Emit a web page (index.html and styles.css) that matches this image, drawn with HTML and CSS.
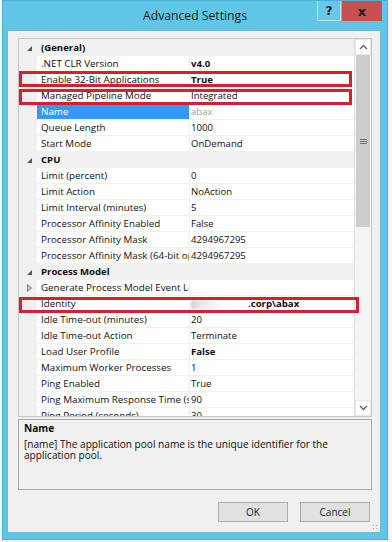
FILE: index.html
```html
<!DOCTYPE html>
<html>
<head>
	<meta charset="utf-8">
	<title>Advanced Settings</title>
	<link rel="stylesheet" href="styles.css">
</head>
<body>
	<div class="window">

		<div class="titlebar">
			<span></span>
			<span class="title">Advanced Settings</span>
			<div class="caption">
				<span class="cap-help">?</span>
				<span class="cap-close">x</span>
			</div>
		</div>

		<div class="client">

			<div class="grid">
				<div class="rows">
					<div class="cat"><span class="exp open"></span>(General)</div>
					<div class="prop"><span class="name">.NET CLR Version</span><span class="val bold">v4.0</span></div>
					<div class="prop"><span class="name">Enable 32-Bit Applications</span><span class="val bold">True</span></div>
					<div class="prop"><span class="name">Managed Pipeline Mode</span><span class="val">Integrated</span></div>
					<div class="prop selected"><span class="name">Name</span><span class="val dim">abax</span></div>
					<div class="prop"><span class="name">Queue Length</span><span class="val">1000</span></div>
					<div class="prop"><span class="name">Start Mode</span><span class="val">OnDemand</span></div>
					<div class="cat"><span class="exp open"></span>CPU</div>
					<div class="prop"><span class="name">Limit (percent)</span><span class="val">0</span></div>
					<div class="prop"><span class="name">Limit Action</span><span class="val">NoAction</span></div>
					<div class="prop"><span class="name">Limit Interval (minutes)</span><span class="val">5</span></div>
					<div class="prop"><span class="name">Processor Affinity Enabled</span><span class="val">False</span></div>
					<div class="prop"><span class="name">Processor Affinity Mask</span><span class="val">4294967295</span></div>
					<div class="prop"><span class="name">Processor Affinity Mask (64-bit option)</span><span class="val">4294967295</span></div>
					<div class="cat"><span class="exp open"></span>Process Model</div>
					<div class="prop"><span class="exp shut"></span><span class="name">Generate Process Model Event Log Entry</span><span class="val"></span></div>
					<div class="prop"><span class="name">Identity</span><span class="val bold"><span class="redact"></span>.corp\abax</span></div>
					<div class="prop"><span class="name">Idle Time-out (minutes)</span><span class="val">20</span></div>
					<div class="prop"><span class="name">Idle Time-out Action</span><span class="val">Terminate</span></div>
					<div class="prop"><span class="name">Load User Profile</span><span class="val bold">False</span></div>
					<div class="prop"><span class="name">Maximum Worker Processes</span><span class="val">1</span></div>
					<div class="prop"><span class="name">Ping Enabled</span><span class="val">True</span></div>
					<div class="prop"><span class="name">Ping Maximum Response Time (seconds)</span><span class="val">90</span></div>
					<div class="prop"><span class="name">Ping Period (seconds)</span><span class="val">30</span></div>
				</div>

				<div class="scrollbar">
					<div class="sb-arrow">
						<svg width="9" height="6" viewBox="0 0 9 6"><path d="M1 5 L4.5 1.5 L8 5" fill="none" stroke="#606060" stroke-width="1.3"/></svg>
					</div>
					<div class="sb-thumb">
						<svg width="7" height="7" viewBox="0 0 7 7"><path d="M0 1.5 H7 M0 3.5 H7 M0 5.5 H7" stroke="#707070" stroke-width="1"/></svg>
					</div>
					<div class="sb-track"></div>
					<div class="sb-arrow">
						<svg width="9" height="6" viewBox="0 0 9 6"><path d="M1 1 L4.5 4.5 L8 1" fill="none" stroke="#606060" stroke-width="1.3"/></svg>
					</div>
				</div>

				<!-- annotation boxes -->
				<div class="mark mark-32bit"></div>
				<div class="mark mark-pipeline"></div>
				<div class="mark mark-identity"></div>
			</div>

			<div class="desc">
				<div class="desc-title">Name</div>
				<div class="desc-text">[name] The application pool name is the unique identifier for the application pool.</div>
			</div>

			<div class="buttons">
				<button class="btn">OK</button>
				<button class="btn">Cancel</button>
			</div>

			<div class="grip"></div>
		</div>

	</div>
</body>
</html>
```

FILE: styles.css
```css
html, body {
	margin: 0;
	padding: 0;
}

body {
	width: 392px;
	height: 542px;
	overflow: hidden;
	background: #f4f4f4;
	font-family: "Open Sans", "Noto Sans", sans-serif;
	font-size: 9.6px;
	color: #0f0f0f;
}

.window {
	margin-left: 2px;
	width: 386px;
	height: 540px;
	box-sizing: border-box;
	background: #5fc6e8;
	border: 1px solid #4eaecf;
	display: flex;
	flex-direction: column;
}

.titlebar {
	height: 29px;
	display: grid;
	grid-template-columns: 1fr auto 1fr;
	align-items: start;
}

.title {
	font-size: 12.2px;
	line-height: 29px;
	color: #202020;
}

.caption {
	justify-self: end;
	display: flex;
	gap: 1px;
	margin-right: 5px;
}

.cap-help,
.cap-close {
	height: 20px;
	display: flex;
	align-items: center;
	justify-content: center;
	font-family: "DejaVu Sans", sans-serif;
	font-weight: bold;
	font-size: 12px;
	color: #1a1a1a;
	box-sizing: border-box;
}

.cap-help {
	width: 24px;
	background: #66c9ea;
	border: 1px solid #b9e6f5;
	border-top: none;
}

.cap-close {
	width: 40px;
	background: #c75050;
	font-size: 13px;
}

.client {
	flex: 1;
	margin: 0 6px 6px 4px;
	background: #f0f0f0;
	border: 1px solid #7cb8cd;
	padding: 7px 8px 0 10px;
	display: flex;
	flex-direction: column;
	position: relative;
}

/* property grid */

.grid {
	height: 377px;
	border: 1px solid #c6c6c6;
	background: #fff;
	display: flex;
	position: relative;
}

.rows {
	flex: 1;
	overflow: hidden;
	padding-top: 1px;
	background: #f0f0f0;
}

.cat,
.prop {
	height: 16px;
	line-height: 16px;
	display: flex;
	position: relative;
	white-space: nowrap;
}

.cat {
	background: #f0f0f0;
	font-weight: bold;
	padding-left: 22px;
}

.prop {
	padding-left: 18px;
	background: #f0f0f0;
}

.prop .name {
	width: 148px;
	padding-left: 4px;
	font-size: 9.8px;
	overflow: hidden;
	background: #fff;
	border-bottom: 1px solid #f0f0f0;
	border-right: 1px solid #f0f0f0;
}

.prop .val {
	flex: 1;
	padding-left: 1px;
	background: #fff;
	border-bottom: 1px solid #f0f0f0;
	overflow: hidden;
}

.bold {
	font-weight: bold;
}

.dim {
	color: #a0a0a0;
}

.prop.selected .name {
	background: #3399ff;
	color: #fff;
}

.exp {
	position: absolute;
	left: 8px;
	top: 6px;
	width: 0;
	height: 0;
}

.exp.open {
	border-left: 5px solid transparent;
	border-bottom: 5px solid #5a5a5a;
}

.exp.shut {
	left: 8px;
	top: 4px;
	border-top: 4px solid transparent;
	border-bottom: 4px solid transparent;
	border-left: 5px solid #7a7a7a;
}

.exp.shut::after {
	content: "";
	position: absolute;
	left: -4px;
	top: -2px;
	border-top: 2px solid transparent;
	border-bottom: 2px solid transparent;
	border-left: 2px solid #fff;
}

.redact {
	display: inline-block;
	width: 57px;
	height: 9px;
	vertical-align: middle;
	background: linear-gradient(90deg, #cfcfcf 0, #e8e8e8 10px, #fafafa 30px, #fff 56px);
	filter: blur(1px);
}

/* scrollbar */

.scrollbar {
	width: 16px;
	border-left: 1px solid #e0e0e0;
	background: #f4f4f4;
	display: flex;
	flex-direction: column;
}

.sb-arrow {
	height: 16px;
	background: #fff;
	display: flex;
	align-items: center;
	justify-content: center;
	border: 1px solid #e6e6e6;
	box-sizing: border-box;
}

.sb-thumb {
	height: 172px;
	background: #cdcdcd;
	margin: 0 1px;
	display: flex;
	align-items: center;
	justify-content: center;
}

.sb-track {
	flex: 1;
}

/* red annotation boxes */

.mark {
	position: absolute;
	border: 3px solid #d6202e;
	box-sizing: border-box;
	left: 0;
}

.mark-32bit {
	top: 32px;
	height: 16px;
	width: 333px;
}

.mark-pipeline {
	top: 50px;
	height: 16px;
	width: 333px;
}

.mark-identity {
	top: 258px;
	height: 16px;
	width: 340px;
}

/* description */

.desc {
	margin-top: 2px;
	height: 71px;
	box-sizing: border-box;
	border: 1px solid #aaaaaa;
	padding: 3px 20px 3px 5px;
	font-size: 10.1px;
	line-height: 11px;
}

.desc-title {
	font-weight: bold;
	margin-bottom: 5px;
}

.buttons {
	display: flex;
	justify-content: flex-end;
	gap: 12px;
	margin-top: 12px;
	padding-right: 2px;
}

.btn {
	width: 70px;
	height: 20px;
	background: #e1e1e1;
	border: 1px solid #adadad;
	font-family: "Open Sans", "Noto Sans", sans-serif;
	font-size: 10px;
	color: #1e1e1e;
	padding: 0;
}

.grip {
	position: absolute;
	right: 2px;
	bottom: 2px;
	width: 6px;
	height: 6px;
	background: radial-gradient(circle, #a8a8a8 0.6px, transparent 0.9px) 0 0 / 3px 3px;
}
```
